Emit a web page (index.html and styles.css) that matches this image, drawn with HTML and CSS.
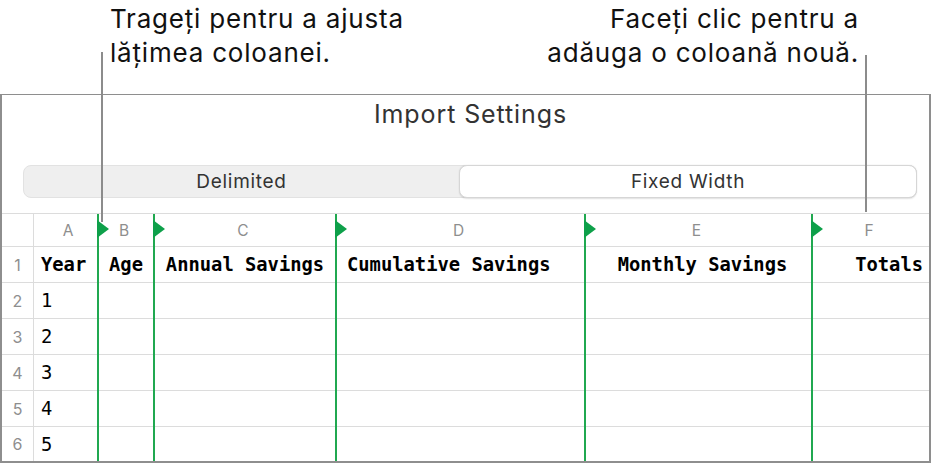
FILE: index.html
```html
<!DOCTYPE html>
<html lang="ro">
<head>
<meta charset="utf-8">
<title>Import Settings</title>
<link rel="stylesheet" href="styles.css">
</head>
<body>
<div class="page">
  <div class="callouts">
    <p class="callout callout-left">Trageți pentru a ajusta<br>lățimea coloanei.</p>
    <p class="callout callout-right">Faceți clic pentru a<br>adăuga o coloană nouă.</p>
  </div>
  <div class="frame">
    <div class="title-area">
      <h1 class="title">Import Settings</h1>
    </div>
    <div class="segmented">
      <div class="segment">Delimited</div>
      <div class="segment selected">Fixed Width</div>
    </div>
    <div class="sheet">
      <div class="col rownum">
        <div class="cell head"></div>
        <div class="cell">1</div>
        <div class="cell">2</div>
        <div class="cell">3</div>
        <div class="cell">4</div>
        <div class="cell">5</div>
        <div class="cell last">6</div>
      </div>
      <div class="col col-a">
        <div class="cell head">A</div>
        <div class="cell hdr left">Year</div>
        <div class="cell data">1</div>
        <div class="cell data">2</div>
        <div class="cell data">3</div>
        <div class="cell data">4</div>
        <div class="cell data last">5</div>
      </div>
      <div class="col split col-b">
        <span class="marker"></span>
        <div class="cell head">B</div>
        <div class="cell hdr center">Age</div>
        <div class="cell"></div>
        <div class="cell"></div>
        <div class="cell"></div>
        <div class="cell"></div>
        <div class="cell last"></div>
      </div>
      <div class="col split col-c">
        <span class="marker"></span>
        <div class="cell head">C</div>
        <div class="cell hdr center">Annual Savings</div>
        <div class="cell"></div>
        <div class="cell"></div>
        <div class="cell"></div>
        <div class="cell"></div>
        <div class="cell last"></div>
      </div>
      <div class="col split col-d">
        <span class="marker"></span>
        <div class="cell head">D</div>
        <div class="cell hdr left-wide">Cumulative Savings</div>
        <div class="cell"></div>
        <div class="cell"></div>
        <div class="cell"></div>
        <div class="cell"></div>
        <div class="cell last"></div>
      </div>
      <div class="col split col-e">
        <span class="marker"></span>
        <div class="cell head">E</div>
        <div class="cell hdr center-shift">Monthly Savings</div>
        <div class="cell"></div>
        <div class="cell"></div>
        <div class="cell"></div>
        <div class="cell"></div>
        <div class="cell last"></div>
      </div>
      <div class="col split col-f">
        <span class="marker"></span>
        <div class="cell head">F</div>
        <div class="cell hdr right">Totals</div>
        <div class="cell"></div>
        <div class="cell"></div>
        <div class="cell"></div>
        <div class="cell"></div>
        <div class="cell last"></div>
      </div>
    </div>
  </div>
  <span class="leader leader-left"></span>
  <span class="leader leader-right"></span>
</div>
</body>
</html>
```

FILE: styles.css
```css
* {
  box-sizing: border-box;
}

html, body {
  margin: 0;
  padding: 0;
  background: #ffffff;
}

body {
  font-family: "Inter", "Roboto", "Liberation Sans", sans-serif;
  color: #000000;
}

.page {
  position: relative;
  width: 931px;
  height: 463px;
  overflow: hidden;
}

/* ---------- callouts ---------- */
.callouts {
  display: flex;
  justify-content: space-between;
  height: 94px;
}

.callout {
  margin: 0;
  padding-top: 2px;
  font-size: 26px;
  line-height: 34px;
  letter-spacing: 0.8px;
  color: #111111;
}

.callout-left {
  padding-left: 110px;
}

.callout-right {
  padding-right: 72px;
  text-align: right;
}

.leader {
  position: absolute;
  width: 2px;
  background: #8c8c8c;
}

.leader-left {
  left: 101px;
  top: 52px;
  height: 170px;
}

.leader-right {
  left: 865px;
  top: 55px;
  height: 157px;
}

/* ---------- frame ---------- */
.frame {
  height: 369px;
  border-top: 1px solid #8e8e8e;
  border-left: 2px solid #8e8e8e;
  border-right: 2px solid #8e8e8e;
  border-bottom: 2px solid #8e8e8e;
  display: flex;
  flex-direction: column;
}

.title-area {
  height: 70px;
  padding-top: 4px;
  padding-left: 10px;
}

.title {
  margin: 0;
  font-size: 25px;
  line-height: 30px;
  font-weight: 400;
  letter-spacing: 0.9px;
  color: #333333;
  text-align: center;
}

.segmented {
  display: flex;
  height: 33px;
  margin: 0 12px 0 21px;
  background: #efefef;
  border: 1px solid #e2e2e2;
  border-radius: 8px;
}

.segment {
  flex: 1;
  display: flex;
  align-items: center;
  justify-content: center;
  font-size: 19px;
  color: #333333;
  letter-spacing: 0.7px;
}

.segment.selected {
  flex: 0 0 458px;
  margin: -1px -1px -1px 0;
  background: #ffffff;
  border: 1px solid #d6d6d6;
  border-radius: 8px;
  box-shadow: 0 0.5px 1.5px rgba(0, 0, 0, 0.12);
}

/* ---------- sheet ---------- */
.sheet {
  display: flex;
  margin-top: 15px;
  border-top: 1px solid #dcdcdc;
  flex: 1;
}

.col {
  position: relative;
  display: flex;
  flex-direction: column;
}

.rownum {
  width: 32px;
  border-right: 1px solid #dcdcdc;
}

.col-a { width: 63px; }
.col-b { width: 56px; }
.col-c { width: 182px; }
.col-d { width: 249px; }
.col-e { width: 227px; }
.col-f { flex: 1; }

.split {
  border-left: 2px solid #20a850;
}

.marker {
  position: absolute;
  left: -2px;
  top: 6px;
  width: 0;
  height: 0;
  border-left: 12px solid #0ea04a;
  border-top: 9.5px solid transparent;
  border-bottom: 9.5px solid transparent;
}

.cell {
  height: 36px;
  border-bottom: 1px solid #dcdcdc;
  display: flex;
  align-items: center;
}

.cell.head {
  height: 33px;
  justify-content: center;
  font-size: 15.5px;
  color: #8e8e8e;
}

.col-a .cell.head {
  padding-left: 5px;
}

.split .cell.head {
  padding-right: 4px;
}

.cell.last {
  border-bottom: none;
  flex: 1;
}

.rownum .cell {
  justify-content: center;
  font-size: 16px;
  color: #8e8e8e;
}

.hdr {
  font-family: "DejaVu Sans Mono", "Liberation Mono", monospace;
  font-weight: 700;
  font-size: 18.8px;
  color: #000000;
  white-space: nowrap;
}

.data {
  font-family: "DejaVu Sans Mono", "Liberation Mono", monospace;
  font-size: 18.8px;
  color: #000000;
  padding-left: 7px;
}

.hdr.left { padding-left: 7px; }
.hdr.center { justify-content: center; }
.hdr.left-wide { padding-left: 10px; }
.hdr.center-shift { justify-content: center; padding-left: 8px; }
.hdr.right { justify-content: flex-end; padding-right: 6px; }
```
